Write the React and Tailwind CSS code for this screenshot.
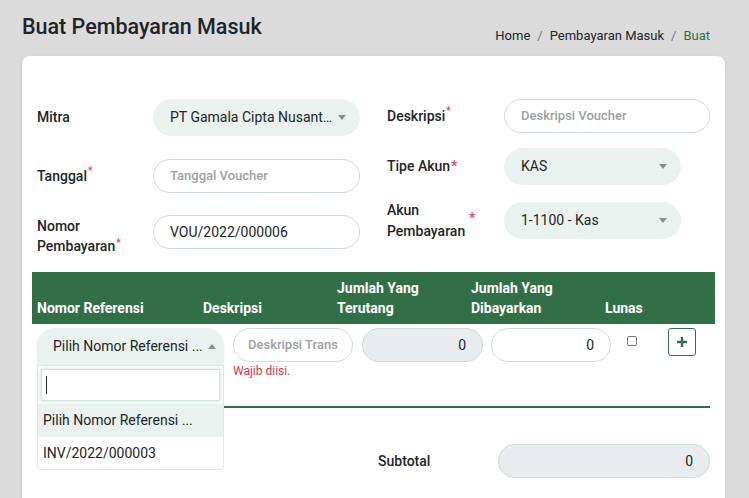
import React from "react";

const Req = ({ sup = true }) => (
    <span className={sup ? "text-[#e0426a] text-[10px] align-top relative -top-[3px] ml-[1px]" : "text-[#e0426a] ml-[1px]"}>*</span>
);

const Caret = ({ up = false }) => (
    <svg width="8" height="5" viewBox="0 0 8 5" className="shrink-0">
        {up ? <path d="M0 5 L4 0 L8 5 Z" fill="#8a8f8c" /> : <path d="M0 0 L8 0 L4 5 Z" fill="#8a8f8c" />}
    </svg>
);

function Select({ value, className = "" }) {
    return (
        <div className={`h-[37px] rounded-full bg-[#eaf2ef] flex items-center pl-[17px] pr-[14px] gap-[5px] text-[14px] text-[#212529] ${className}`}>
            <span className="truncate flex-1">{value}</span>
            <Caret />
        </div>
    );
}

function Input({ value, placeholder, className = "", right = false, gray = false }) {
    return (
        <div className={`h-[34px] rounded-full border border-[#cfdcd6] flex items-center px-[16px] text-[14px] ${gray ? "bg-[#e9ecef]" : "bg-white"} ${right ? "justify-end" : ""} ${className}`}>
            {value ? <span className="text-[#212529] truncate">{value}</span> : <span className="text-[#9aa1a5] font-medium text-[13px] whitespace-nowrap">{placeholder}</span>}
        </div>
    );
}

export default function App() {
    return (
        <div className="min-h-[498px] bg-[#dadbda] pt-[14px] pl-[22px] pr-[24px] overflow-hidden" style={{ fontFamily: "Roboto, 'Liberation Sans', sans-serif" }}>
            <div className="flex items-start justify-between">
                <h1 className="text-[21.5px] leading-[26px] font-medium text-[#212529]">Buat Pembayaran Masuk</h1>
                <div className="mt-[12px] mr-[15px] text-[13px] leading-[20px] flex gap-[7px]">
                    <span className="text-[#212529]">Home</span>
                    <span className="text-[#6c757d]">/</span>
                    <span className="text-[#212529]">Pembayaran Masuk</span>
                    <span className="text-[#6c757d]">/</span>
                    <span className="text-[#317047]">Buat</span>
                </div>
            </div>

            <div className="mt-[10px] bg-white rounded-t-[8px] shadow-sm px-[15px] pt-[43px] pb-[30px]">
                <div className="grid grid-cols-2 gap-x-[27px] text-[14px] text-[#212529]">
                    {/* left column */}
                    <div className="flex flex-col">
                        <div className="flex items-center">
                            <div className="w-[116px] font-medium">Mitra</div>
                            <Select value="PT Gamala Cipta Nusantara" className="w-[207px]" />
                        </div>
                        <div className="flex items-center mt-[23px]">
                            <div className="w-[116px] font-medium">Tanggal<Req /></div>
                            <Input placeholder="Tanggal Voucher" className="w-[207px] h-[33px]" />
                        </div>
                        <div className="flex items-start mt-[22px]">
                            <div className="w-[116px] font-medium leading-[20px] pr-[10px] mt-[1px]">Nomor Pembayaran<Req /></div>
                            <Input value="VOU/2022/000006" className="w-[207px] h-[33px]" />
                        </div>
                    </div>
                    {/* right column */}
                    <div className="flex flex-col">
                        <div className="flex items-center">
                            <div className="w-[117px] font-medium">Deskripsi<Req /></div>
                            <Input placeholder="Deskripsi Voucher" className="w-[206px]" />
                        </div>
                        <div className="flex items-center mt-[15px]">
                            <div className="w-[117px] font-medium">Tipe Akun<Req sup={false} /></div>
                            <Select value="KAS" className="w-[177px]" />
                        </div>
                        <div className="flex items-center mt-[13px]">
                            <div className="w-[117px] font-medium flex items-center">
                                <span className="w-[82px] leading-[21px] mt-[2px]">Akun Pembayaran</span>
                                <span className="text-[#e0426a] -mt-[3px]">*</span>
                            </div>
                            <Select value="1-1100 - Kas" className="w-[177px]" />
                        </div>
                    </div>
                </div>

                {/* table header */}
                <div className="mt-[16px] -mx-[5px] bg-[#317047] h-[52px] px-[5px] pb-[6px] grid grid-cols-[166px_134px_134px_134px_1fr] items-end text-white font-bold text-[14px] leading-[20px]">
                    <div>Nomor Referensi</div>
                    <div>Deskripsi</div>
                    <div>Jumlah Yang<br />Terutang</div>
                    <div>Jumlah Yang<br />Dibayarkan</div>
                    <div>Lunas</div>
                </div>

                {/* table body */}
                <div className="pt-[4px] pb-[27px] border-b-2 border-[#317047] flex items-start">
                    <div className="relative w-[187px]">
                        <div className="h-[37px] rounded-t-[18px] bg-[#eaf2ef] flex items-center pl-[16px] pr-[8px] text-[14px] text-[#212529] shadow-[0_1px_3px_rgba(0,0,0,0.08)]">
                            <span className="truncate flex-1">Pilih Nomor Referensi ...</span>
                            <Caret up />
                        </div>
                        <div className="absolute left-0 top-[37px] w-[187px] bg-white border border-[#e3e6e4] rounded-b-[4px] z-10 text-[14px] text-[#212529]">
                            <div className="p-[3px]">
                                <div className="h-[32px] border border-[#cfe5da] shadow-[0_0_4px_rgba(49,112,71,0.25)] bg-white flex items-center pl-[4px]">
                                    <span className="w-[1px] h-[18px] bg-[#212529]"></span>
                                </div>
                            </div>
                            <div className="h-[33px] bg-[#eaf2ef] flex items-center pl-[5px]">Pilih Nomor Referensi ...</div>
                            <div className="h-[32px] flex items-center pl-[5px]">INV/2022/000003</div>
                        </div>
                    </div>
                    <div className="ml-[9px] w-[120px]">
                        <Input placeholder="Deskripsi Trans" className="w-[120px] pl-[14px] pr-[4px]" />
                        <div className="text-[12px] text-[#dc3545] mt-[1px] leading-[16px]">Wajib diisi.</div>
                    </div>
                    <Input value="0" right gray className="ml-[9px] w-[121px]" />
                    <Input value="0" right className="ml-[8px] w-[120px]" />
                    <div className="ml-[16px] mt-[8px] w-[10px] h-[10px] border border-[#767676] rounded-[2px]"></div>
                    <div className="ml-[31px] w-[28px] h-[28px] border border-[#317047] rounded-[3px] flex items-center justify-center">
                        <svg width="12" height="12" viewBox="0 0 12 12"><path d="M6 1 V11 M1 6 H11" stroke="#317047" strokeWidth="2.4" /></svg>
                    </div>
                </div>

                {/* subtotal */}
                <div className="mt-[36px] flex justify-end items-center text-[14px]">
                    <div className="w-[120px] font-medium text-[#212529]">Subtotal</div>
                    <Input value="0" right gray className="w-[212px]" />
                </div>
            </div>
        </div>
    );
}
